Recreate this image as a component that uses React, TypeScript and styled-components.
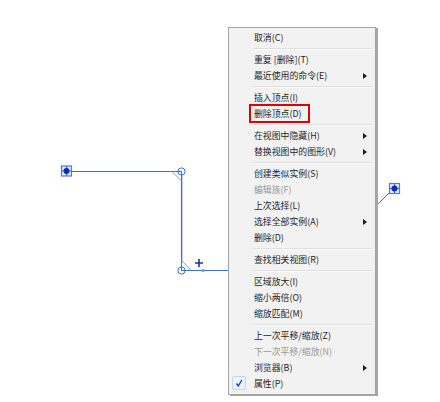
import React from "react";
import styled, { createGlobalStyle } from "styled-components";

const Global = createGlobalStyle`
  html, body { margin: 0; padding: 0; background: #fff; }
  #root { width: 440px; height: 402px; overflow: hidden; }
`;

const Page = styled.div`
  position: relative;
  width: 440px;
  height: 402px;
  background: #fff;
  overflow: hidden;
`;

const Diagram = styled.svg`
  position: absolute;
  left: 0;
  top: 0;
`;

const Menu = styled.div`
  position: absolute;
  left: 228px;
  top: 27px;
  width: 148px;
  box-sizing: border-box;
  padding: 2px 2px 2px;
  background: #f2f2f2;
  border: 1px solid #a4a4a4;
  box-shadow: 2px 1px 0 #a6a6a6;
  font-family: "Noto Sans CJK SC", "Liberation Sans", sans-serif;
  font-size: 8.9px;
  color: #262626;
`;

const Row = styled.div<{ $disabled?: boolean }>`
  position: relative;
  height: 16px;
  line-height: 16px;
  padding-left: 23px;
  white-space: nowrap;
  color: ${(p) => (p.$disabled ? "#989898" : "inherit")};
`;

const Separator = styled.div`
  height: 1px;
  margin: 2px 1px 3px 22px;
  background: #dfdfdf;
  box-shadow: 0 1px 0 #fbfbfb;
`;

const Arrow = styled.span`
  position: absolute;
  right: 6px;
  top: 5px;
  width: 0;
  height: 0;
  border-left: 4px solid #1c1c1c;
  border-top: 3px solid transparent;
  border-bottom: 3px solid transparent;
`;

const CheckBox = styled.span`
  position: absolute;
  left: 1px;
  top: 0;
  width: 14px;
  height: 14px;
  box-sizing: border-box;
  border: 1px solid #c2d8ec;
  border-radius: 2px;
  background: #eaf3fb;
  display: flex;
  align-items: center;
  justify-content: center;
`;

const Highlight = styled.div`
  position: absolute;
  left: 249px;
  top: 104px;
  width: 61px;
  height: 19px;
  box-sizing: border-box;
  border: 2px solid #e00000;
`;

type Item = { label?: string; sub?: boolean; disabled?: boolean; checked?: boolean; sep?: boolean };

const items: Item[] = [
  { label: "取消(C)" },
  { sep: true },
  { label: "重复 [删除](T)" },
  { label: "最近使用的命令(E)", sub: true },
  { sep: true },
  { label: "插入顶点(I)" },
  { label: "删除顶点(D)" },
  { sep: true },
  { label: "在视图中隐藏(H)", sub: true },
  { label: "替换视图中的图形(V)", sub: true },
  { sep: true },
  { label: "创建类似实例(S)" },
  { label: "编辑族(F)", disabled: true },
  { label: "上次选择(L)" },
  { label: "选择全部实例(A)", sub: true },
  { label: "删除(D)" },
  { sep: true },
  { label: "查找相关视图(R)" },
  { sep: true },
  { label: "区域放大(I)" },
  { label: "缩小两倍(O)" },
  { label: "缩放匹配(M)" },
  { sep: true },
  { label: "上一次平移/缩放(Z)" },
  { label: "下一次平移/缩放(N)", disabled: true },
  { label: "浏览器(B)", sub: true },
  { label: "属性(P)", checked: true },
];

const Handle = ({ x, y }: { x: number; y: number }) => (
  <g>
    <rect x={x - 5} y={y - 5} width={10} height={10} fill="#e4ecfb" stroke="#4f7ada" strokeWidth={1.2} />
    <path d={`M${x} ${y - 5}V${y + 5}M${x - 5} ${y}H${x + 5}`} stroke="#3f6bd2" strokeWidth={1.2} />
    <circle cx={x} cy={y} r={3} fill="#0a2fb4" />
  </g>
);

export default function App() {
  return (
    <Page>
      <Global />
      <Diagram width={440} height={402} viewBox="0 0 440 402">
        <path d="M182.5 175V262" fill="none" stroke="#c4d4f2" strokeWidth={1} />
        <path d="M66 171.5H181.5V270.5H229" fill="none" stroke="#3d6cd6" strokeWidth={1.1} />
        <path d="M172 171.5L181.5 181M181.5 260L191 270.5" fill="none" stroke="#7f9ce0" strokeWidth={1} />
        <circle cx={181.5} cy={171.5} r={3.6} fill="none" stroke="#3d6cd6" strokeWidth={1} />
        <circle cx={181.5} cy={270.5} r={3.6} fill="none" stroke="#3d6cd6" strokeWidth={1} />
        <circle cx={203} cy={270.5} r={1.6} fill="#6e95e0" />
        <path d="M199 259V267M195 263H203" stroke="#1238a8" strokeWidth={1.6} />
        <path d="M376 206L393 189" stroke="#3d6cd6" strokeWidth={1} />
        <Handle x={66.5} y={171} />
        <Handle x={394.5} y={188.5} />
      </Diagram>
      <Menu>
        {items.map((it, i) =>
          it.sep ? (
            <Separator key={i} />
          ) : (
            <Row key={i} $disabled={it.disabled}>
              {it.checked && (
                <CheckBox>
                  <svg width={10} height={10} viewBox="0 0 10 10">
                    <path d="M2.5 5.5L4.3 8L7.8 2" fill="none" stroke="#1a3fb0" strokeWidth={1.3} />
                  </svg>
                </CheckBox>
              )}
              {it.label}
              {it.sub && <Arrow />}
            </Row>
          )
        )}
      </Menu>
      <Highlight />
    </Page>
  );
}
